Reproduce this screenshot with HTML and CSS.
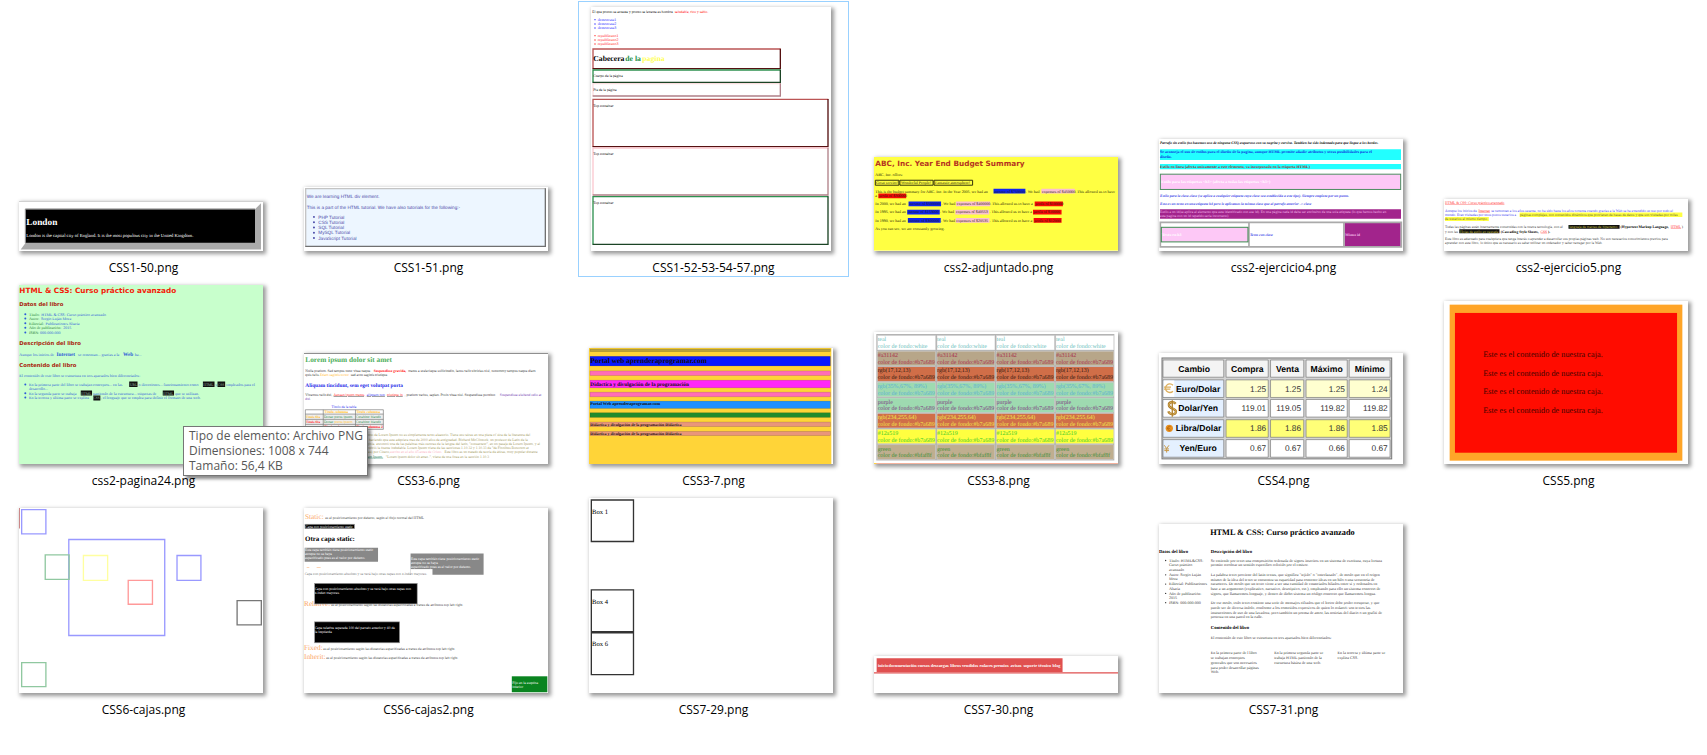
FILE: index.html
```html
<!DOCTYPE html>
<html lang="es">
<head>
<meta charset="utf-8">
<title>Imágenes</title>
<link rel="stylesheet" href="styles.css">
</head>
<body>
<main>
<ul class="files">

<li class="file"><figure>
<svg class="pic" viewBox="0 0 735 150">
<path fill="#aaa" d="M5 146L20 126H711V25L729 7V146Z"/><path stroke="#aaa" stroke-width="2" d="M0 1H735"/>
<rect x="20" y="25" width="691" height="101" fill="#000"/><path d="M19 127V24H711" fill="none" stroke="#888" stroke-width="3"/>
<g fill="#fff"><text class="b" x="22" y="71" font-size="28">London</text>
<text x="22" y="108" font-size="14">London is the capital city of England. It is the most populous city in the United Kingdom.</text></g>
</svg><figcaption>CSS1-50.png</figcaption></figure></li>

<li class="file"><figure>
<svg class="pic sans" viewBox="0 0 735 192">
<rect x="4" y="3" width="724" height="177" fill="#edf6ff"/>
<path d="M5 181V5H728" fill="none" stroke="#c4c4c4" stroke-width="4"/><path d="M4 179H727V4" fill="none" stroke="#707070" stroke-width="4"/>
<g fill="#4a4aa8" font-size="14"><text x="8" y="34">We are learning HTML div element.</text>
<text x="8" y="66">This is a part of the HTML tutorial. We have also tutorials for the following:-</text>
<text x="43" y="95">PHP Tutorial</text><text x="43" y="111">CSS Tutorial</text><text x="43" y="127">SQL Tutorial</text><text x="43" y="143">MySQL Tutorial</text><text x="43" y="159">JavaScript Tutorial</text>
<circle cx="30" cy="90" r="3"/><circle cx="30" cy="106" r="3"/><circle cx="30" cy="122" r="3"/><circle cx="30" cy="138" r="3"/><circle cx="30" cy="154" r="3"/></g>
</svg><figcaption>CSS1-51.png</figcaption></figure></li>

<li class="file selected"><figure>
<svg class="pic narrow" viewBox="62 21 720 732" font-size="11">
<text x="66" y="38">El que pronto se acuesta y pronto se levanta es hombre</text><text x="313" y="38" fill="red">saludable, rico y sabio.</text>
<g fill="#22f" font-size="12"><text x="82" y="63">democrata1</text><text x="82" y="76">democrata2</text><text x="82" y="88">democrata3</text><circle cx="74" cy="59" r="2"/><circle cx="74" cy="72" r="2"/><circle cx="74" cy="84" r="2"/></g>
<g fill="#f22" font-size="12"><text x="82" y="111">republicano1</text><text x="82" y="124">republicano2</text><text x="82" y="136">republicano3</text><circle cx="74" cy="107" r="2"/><circle cx="74" cy="120" r="2"/><circle cx="74" cy="132" r="2"/></g>
<g class="line4"><path stroke="#b55" d="M68 207V147H631"/><path stroke="#511" d="M67 206H630V146"/>
<path stroke="#2f9150" d="M68 248V210H631"/><path stroke="#1b4425" d="M67 247H630V209"/>
<path stroke="#fbdde0" d="M68 289V251H631"/><path stroke="#b08088" d="M67 288H630V250"/>
<path stroke="#b55" d="M68 441V298H774"/><path stroke="#511" d="M67 440H773V297"/>
<path stroke="#fbc8d0" d="M68 586V444H774"/><path stroke="#b08088" d="M67 585H773V443"/>
<path stroke="#2f9150" d="M68 734V590H774"/><path stroke="#1b4425" d="M67 733H773V589"/></g>
<g class="b" font-size="23"><text x="69" y="184">Cabecera</text><text x="165" y="184" fill="#1a9048">de la</text><text x="216" y="184" fill="#ff5">pagina</text></g>
<text x="69" y="231">Cuerpo de la página</text><text x="69" y="274">Pie de la página</text>
<text x="69" y="320">Top container</text><text x="69" y="466">Top container</text><text x="69" y="612">Top container</text>
</svg><figcaption>CSS1-52-53-54-57.png</figcaption></figure></li>

<li class="file"><figure>
<svg class="pic" viewBox="41 81 735 282" font-size="12">
<rect x="41" y="81" width="735" height="282" fill="#ffff42"/>
<text class="verdana" x="45" y="107" font-size="22" fill="#b5351f">ABC, Inc. Year End Budget Summary</text>
<path d="M45 151H116V166H45ZM119 151H219V166H119ZM222 151H338V166H222Z" fill="none" stroke="#33330a" stroke-width="3"/>
<path fill="#1024f0" d="M401 177H497V191H401ZM145 215H243V229H145ZM141 240H239V254H141ZM143 265H242V279H143Z"/>
<path fill="#fbc0d0" d="M545 177H646V191H545ZM288 215H391V229H288ZM286 240H388V254H286ZM287 265H389V279H287Z"/>
<path fill="#f80808" d="M54 191H138V205H54ZM525 215H610V229H525ZM520 240H606V254H520ZM522 265H606V279H522Z"/>
<g fill="#222208"><text x="45" y="137">ABC, Inc. offers:</text><text x="47" y="163">Great service!</text><text x="122" y="163">Wonderful People!</text><text x="225" y="163">Fantastic atmosphere!</text>
<text x="45" y="188">This is the budget summary for ABC, Inc. In the Year 2005, we had an</text><text x="403" y="188">income of $750000</text><text x="498" y="188">. We had</text><text x="547" y="188">expenses of $450000</text><text x="647" y="188">. This allowed us to have</text>
<text x="45" y="202">a</text><text x="56" y="202">profit of $300000</text>
<text x="45" y="226">In 2000, we had an</text><text x="147" y="226">income of $500000</text><text x="244" y="226">. We had</text><text x="290" y="226">expenses of $400000</text><text x="391" y="226">. This allowed us to have a</text><text x="527" y="226">profit of $100000</text>
<text x="45" y="251">In 1995, we had an</text><text x="143" y="251">income of $153000</text><text x="240" y="251">. We had</text><text x="288" y="251">expenses of $40553</text><text x="389" y="251">. This allowed us to have a</text><text x="522" y="251">profit of $10000</text>
<text x="45" y="276">In 1990, we had an</text><text x="145" y="276">income of $300000</text><text x="243" y="276">. We had</text><text x="289" y="276">expenses of $20535</text><text x="390" y="276">. This allowed us to have a</text><text x="524" y="276">profit of $12000</text>
<text x="45" y="302">As you can see, we are constantly growing.</text></g>
</svg><figcaption>css2-adjuntado.png</figcaption></figure></li>

<li class="file"><figure>
<svg class="pic" viewBox="57 27 735 336" font-size="11">
<path fill="#2ff" d="M60 58H786V90H60ZM60 102H786V118H60Z"/>
<rect x="61" y="133" width="724" height="46" fill="#fdc8f6" stroke="#4c8c60" stroke-width="3"/>
<path fill="#a2248c" d="M60 239H786V267H60ZM616 280H785V350H616Z"/>
<path d="M61 278H787V352H61ZM328 278V352M614 278V352" fill="none" stroke="#aaa" stroke-width="5"/>
<rect x="64" y="293" width="261" height="44" fill="#fdc8f6" stroke="#3c8c50" stroke-width="3"/>
<text class="bi" x="60" y="41">Parrafo sin estilo (no hacemos uso de ninguna CSS) asqueroso con su negrita y cursiva. Tambien ha sido indentado para que llegue a los bordes.</text>
<g class="b" font-size="12"><text x="60" y="70" fill="#1030e0">Se aconseja el uso de estilos para el diseño de la pagina, aunque HTML permite añadir atributos y otras posibilidades para el</text><text x="60" y="85" fill="#1030e0">diseño.</text>
<text x="60" y="114" fill="#a03030">Estilo en linea (afecta unicamente a este elemento, va incorporado en la etiqueta HTML)</text>
<text x="64" y="160" fill="#fff">Estilo para las etiquetas &lt;h3&gt; (afecta a todas las etiquetas &lt;h3&gt;)</text>
<text x="66" y="318" fill="#fff">Texto en h3</text></g>
<g class="bi" fill="#3a42e8"><text x="60" y="201">Estilo para la clase.clase (se aplica a cualquier etiqueta cuya clase sea establecida a este tipo). Siempre empieza por un punto.</text>
<text x="60" y="226">Esto es un texto en una etiqueta h4 pero le aplicamos la misma clase que al parrafo anterior -&gt; clase</text><text x="331" y="318">Texto con clase</text></g>
<g fill="#f4b8ea"><text x="60" y="249">Estilo a un id(se aplica al elemento que este identificado con ese id). En una página cada id debe ser exclusivo de una sola etiqueta (lo que hemos hecho en</text><text x="60" y="262">esta pagina con un id repetido seria incorrecto)</text><text x="618" y="318" class="b">Mismo id</text></g>
</svg><figcaption>css2-ejercicio4.png</figcaption></figure></li>

<li class="file"><figure>
<svg class="pic" viewBox="72 57 735 156" font-size="11">
<path fill="#ff4" d="M300 98H790V111H300ZM75 111H207V123H75Z"/><path fill="#111" d="M447 135H601V147H447ZM118 148H239V160H118Z"/>
<text class="u" x="75" y="73" fill="#f33">HTML &amp; CSS: Curso práctico avanzado</text>
<g fill="#4444f0"><text x="75" y="95">Aunque los inicios de</text><text class="u" x="176" y="95" fill="#f22">Internet</text><text x="214" y="95">se remontan a los años sesenta, no ha sido hasta los años noventa cuando gracias a la Web se ha extendido su uso por todo el</text>
<text x="75" y="108">mundo. Eran visitadas por unos pocos usuarios a</text></g>
<g fill="#66662a"><text x="301" y="108">páginas complejas, con contenidos dinámicos que provienen de bases de datos y que son visitadas por miles</text><text x="75" y="120">de usuarios al mismo tiempo</text></g>
<g fill="#444"><text x="75" y="145">Todas las páginas están internamente construidas con la nueva tecnología, con el</text><text x="75" y="158">y con las</text>
<text x="75" y="181">Este libro es adecuado para cualquiera que tenga interés o aprender a desarrollar sus propias páginas web. No son necesarios conocimientos previos para</text>
<text x="75" y="194">aprender con este libro, lo único que es necesario es saber utilizar un ordenador y saber navegar por la Web.</text></g>
<g fill="#c8c040"><text x="449" y="145">lenguaje de marcas de hipertexto</text><text x="120" y="158">Hojas de estilo en cascada</text></g>
<g class="b"><text x="604" y="145">(Hypertext Markup Language,</text><text x="243" y="158">(Cascading Style Sheets,</text><text x="385" y="158">).</text></g>
<g class="u" fill="#f33"><text x="755" y="145">HTML</text><text x="363" y="158">CSS</text></g><text x="788" y="145">)</text>
</svg><figcaption>css2-ejercicio5.png</figcaption></figure></li>

<li class="file"><figure>
<svg class="pic" viewBox="57 27 735 540" font-size="12">
<rect x="57" y="27" width="735" height="540" fill="#c8ffcc"/>
<text class="verdana" x="58" y="51" font-size="22" fill="#f41c08">HTML &amp; CSS: Curso práctico avanzado</text>
<g class="verdana" font-size="16" fill="#a8240c"><text x="58" y="90">Datos del libro</text><text x="58" y="208">Descripción del libro</text><text x="58" y="274">Contenido del libro</text></g>
<g fill="#2a7a3a"><text x="87" y="119">Título:</text><text x="87" y="132">Autor:</text><text x="87" y="146">Editorial:</text><text x="87" y="160">Año de publicación:</text><text x="87" y="174">ISBN:</text></g>
<g fill="#2c5ad8"><text x="124" y="119">HTML &amp; CSS: Curso práctico avanzado</text><text x="123" y="132">Sergio Luján Mora</text><text x="137" y="146">Publicaciones Altaria</text><text x="190" y="160">2015</text><text x="120" y="174">000-000-000</text>
<circle cx="76" cy="115" r="3"/><circle cx="76" cy="128" r="3"/><circle cx="76" cy="142" r="3"/><circle cx="76" cy="156" r="3"/><circle cx="76" cy="170" r="3"/>
<text x="58" y="241">Aunque los inicios de</text><text class="b" x="170" y="241" font-size="16">Internet</text><text x="235" y="241">se remontan... gracias a la</text><text class="b" x="370" y="241" font-size="16">Web</text><text x="406" y="241">ha...</text>
<text x="58" y="303">El contenido de este libro se estructura en tres apartados bien diferenciados:</text>
<circle cx="76" cy="327" r="3"/><circle cx="76" cy="353" r="3"/><circle cx="76" cy="366" r="3"/>
<text x="87" y="331">En la primera parte del libro se trabajan conceptos... en las</text><text x="417" y="331">o direcciones... funcionamiento como</text><text x="648" y="331">y</text><text x="681" y="331">empleados para el</text>
<text x="87" y="344">desarrollo...</text>
<text x="87" y="357">En la segunda parte se trabaja</text><text x="280" y="357">partiendo de la estructura... etiquetas de</text><text x="527" y="357">que se utilizan.</text>
<text x="87" y="370">En la tercera y última parte se explica</text><text x="303" y="370">, el lenguaje que se emplea para definir el formato de una web.</text></g>
<path fill="#111" d="M389 318H414V334H389ZM611 318H646V334H611ZM655 318H678V334H655ZM243 345H277V360H243ZM490 345H524V360H490ZM281 360H302V375H281Z"/>
<g fill="#9ab8a0" font-size="11"><text x="391" y="330">URL</text><text x="612" y="330">HTML</text><text x="656" y="330">CSS</text><text x="244" y="357">HTML</text><text x="491" y="357">HTML</text><text x="281" y="371">CSS</text></g>
</svg><figcaption>css2-pagina24.png</figcaption></figure>
<div class="tooltip" role="tooltip">Tipo de elemento: Archivo PNG<br>Dimensiones: 1008 x 744<br>Tamaño: 56,4 KB</div>
</li>

<li class="file"><figure>
<svg class="pic" viewBox="42 37 735 336" font-size="11">
<path stroke="#777" stroke-width="3" d="M42 38H777"/>
<text class="b" x="46" y="63" font-size="22" fill="#4cae5a">Lorem ipsum dolor sit amet</text>
<g fill="#333"><text x="46" y="94">Nulla pretium. Sed tempus nunc vitae neque.</text><text x="356" y="94">metus a scelerisque sollicitudin, lacus velit ultricies nisl, nonummy tempus neque diam</text><text x="46" y="107">quis felis.</text><text x="183" y="107">sed arcu sagittis tristique.</text>
<text x="46" y="166">Vivamus velit dui,</text><text x="345" y="166">, pretium varius, sapien. Proin vitae nisi. Suspendisse porttitor.</text></g>
<text class="b" x="252" y="94" fill="#f11">Suspendisse gravida,</text><text x="90" y="107" fill="#fb3">Etiam sagittis tortor</text>
<text class="b" x="46" y="138" font-size="16" fill="#1c28e8">Aliquam tincidunt, sem eget volutpat porta</text>
<g class="u"><text x="131" y="166" fill="#f22">Aenean ipsum metus,</text><text x="231" y="166" fill="#33e">aliquam non</text><text x="292" y="166" fill="#f22">tristique in</text></g>
<g fill="#7040b0"><text x="632" y="166">Suspendisse eleifend odio at</text><text x="46" y="179">dui.</text></g>
<text x="125" y="202" fill="#33e">Título de la tabla</text>
<path fill="#eee" d="M46 221H281V267H46Z"/>
<path d="M46 208H281V267H46ZM46 221H281M46 237H281M46 252H281M100 208V267M197 208V267" fill="none" stroke="#777" stroke-width="2"/>
<g class="b"><g fill="#fb2"><text x="103" y="219">Título columna</text><text x="199" y="219">Título columna</text><text x="48" y="233" font-size="10">Título fila</text></g>
<g fill="#f22"><text x="48" y="248" font-size="10">Título fila</text><text x="103" y="263">Título columna</text><text x="199" y="263">Título columna 2</text></g></g>
<g fill="#2a8a4a"><text x="102" y="233">Donec purus ipsum</text><text x="198" y="233">Curabitur blandit</text><text x="102" y="248">Donec</text><text x="198" y="248">Curabitur blandit</text></g><text x="134" y="248" fill="#fb2">purus ipsum</text>
<g fill="#a39a62"><text x="218" y="288">el texto de Lorem Ipsum no es simplemente texto aleatorio. Tiene sus raices en una pieza cl´sica de la literatura del</text>
<text x="218" y="301">ino, haciendo que este adquiera mas de 2000 años de antiguedad. Richard McClintock, un profesor de Latin de la</text>
<text x="218" y="314">Virginia, encontró una de las palabras más oscuras de la lengua del latín, "consecteur", en un pasaje de Lorem Ipsum, y al</text>
<text x="218" y="327">descubrió la fuente indudable. Lorem Ipsum viene de las secciones 1.10.32 y 1.10.33 de "de Finnibus Bonorum et</text>
<text x="218" y="339">Males) por Cicero,</text><text x="465" y="339">Este libro es un tratado de teoría de éticas, muy popular durante</text>
<text x="288" y="352">"Lorem ipsum dolor sit amet..", viene de una linea en la sección 1.10.3</text></g>
<text x="302" y="339" fill="#fab0c0">escrito en el año 45 antes de Cristo.</text><text class="u" x="218" y="352" fill="#1a8060">Lorem Ipsum,</text>
</svg><figcaption>CSS3-6.png</figcaption></figure></li>

<li class="file"><figure>
<svg class="pic" viewBox="57 66 735 351">
<rect x="57" y="66" width="730" height="351" fill="#ffd438"/>
<g stroke="#000" stroke-opacity=".18" stroke-width="2"><rect x="60" y="69" width="724" height="8" fill="#b8a23c"/><rect x="60" y="91" width="724" height="29" fill="#0818ff"/><rect x="60" y="135" width="724" height="14" fill="#ff6eb6"/><rect x="60" y="163" width="724" height="23" fill="#ff28f8"/><rect x="60" y="199" width="724" height="14" fill="#ff6eb6"/><rect x="60" y="226" width="724" height="22" fill="#1e90ff"/><rect x="60" y="261" width="724" height="14" fill="#228b2c"/><rect x="60" y="289" width="724" height="14" fill="#e9967a"/><rect x="60" y="317" width="724" height="13" fill="#e9967a"/></g>
<g class="b" fill="#120c10"><text x="61" y="112" font-size="22">Portal web aprenderaprogramar.com</text><text x="61" y="179" font-size="16">Didactica y divulgación de la programación</text><text x="61" y="239" font-size="13">Portal Web aprenderaprogramar.com</text><text x="61" y="301" font-size="12">Didáctica y divulgación de la programación Didáctica</text><text x="61" y="328" font-size="12">Didáctica y divulgación de la programación Didáctica</text></g>
</svg><figcaption>CSS3-7.png</figcaption></figure></li>

<li class="file"><figure>
<svg class="pic" viewBox="41 18 735 399" font-size="18">
<path fill="#f0987c" d="M41 413H776V417H41Z"/><path fill="#fd3" d="M41 413H48V417H41Z"/>
<rect x="48" y="24" width="717" height="381" fill="#b4b4b4"/>
<g id="swatches"><g stroke="#ddd"><rect x="52" y="29" width="174" height="43" fill="#fff"/><rect x="52" y="76" width="174" height="43" fill="#b7a689"/><rect x="52" y="123" width="174" height="43" fill="#d06e48"/><rect x="52" y="170" width="174" height="43" fill="#9edab0"/><rect x="52" y="217" width="174" height="43" fill="#9edab0"/><rect x="52" y="264" width="174" height="43" fill="#d06e48"/><rect x="52" y="311" width="174" height="43" fill="#ffff40"/><rect x="52" y="358" width="174" height="43" fill="#bfae8f"/></g>
<g fill="#6cc0bc"><text x="52" y="45">teal</text><text x="52" y="65">color de fondo:white</text></g>
<g fill="#a82e4c"><text x="52" y="93">#a31142</text><text x="52" y="113">color de fondo:#b7a689</text></g>
<g fill="#301810"><text x="52" y="140">rgb(17,12,13)</text><text x="52" y="160">color de fondo:#b7a689</text></g>
<g fill="#5ab0d4"><text x="52" y="187">rgb(35%,67%, 89%)</text><text x="52" y="207">color de fondo:#b7a689</text></g>
<g fill="#7c3a80"><text x="52" y="234">purple</text><text x="52" y="254">color de fondo:#b7a689</text></g>
<g fill="#f0e848"><text x="52" y="281">rgb(234,255,64)</text><text x="52" y="301">color de fondo:#b7a689</text></g>
<g fill="#38cc28"><text x="52" y="328">#12a519</text><text x="52" y="348">color de fondo:#b7a689</text></g>
<g fill="#3c8c34"><text x="52" y="375">green</text><text x="52" y="395">color de fondo:#bfaf8f</text></g></g>
</svg><figcaption>CSS3-8.png</figcaption></figure></li>

<li class="file"><figure>
<svg class="pic sans" viewBox="0 0 735 336" font-size="25">
<rect x="9" y="15" width="692" height="304" fill="#d4d4d4" stroke="#777" stroke-width="3"/>
<g stroke="#777" stroke-width="2"><path fill="#f4f4f4" d="M12 21H195V73H12ZM202 21H329V73H202ZM336 21H436V73H336ZM443 21H567V73H443ZM573 21H696V73H573Z"/>
<path fill="#e4f0ff" d="M12 81H195V134H12ZM12 140H195V193H12ZM12 201H195V254H12ZM12 261H195V314H12Z"/>
<path fill="#ffffd0" d="M202 81H329V134H202ZM336 81H436V134H336ZM443 81H567V134H443ZM573 81H696V134H573Z"/>
<path fill="#fff" d="M202 140H329V193H202ZM336 140H436V193H336ZM443 140H567V193H443ZM573 140H696V193H573ZM202 261H329V314H202ZM336 261H436V314H336ZM443 261H567V314H443ZM573 261H696V314H573Z"/>
<path fill="#ffff78" d="M202 201H329V254H202ZM336 201H436V254H336ZM443 201H567V254H443ZM573 201H696V254H573Z"/></g>
<path fill="#fff" d="M14 83H46V132H14ZM14 142H62V191H14Z"/>
<g class="b mid" font-size="26"><text x="106" y="56">Cambio</text><text x="266" y="56">Compra</text><text x="387" y="56">Venta</text><text x="505" y="56">Máximo</text><text x="635" y="56">Mínimo</text>
<text x="118" y="116">Euro/Dolar</text><text x="118" y="175">Dolar/Yen</text><text x="119" y="235">Libra/Dolar</text><text x="118" y="295">Yen/Euro</text></g>
<g class="end" fill="#333"><text x="323" y="116">1.25</text><text x="428" y="116">1.25</text><text x="560" y="116">1.25</text><text x="689" y="116">1.24</text>
<text x="323" y="175">119.01</text><text x="428" y="175">119.05</text><text x="560" y="175">119.82</text><text x="689" y="175">119.82</text>
<text x="323" y="235">1.86</text><text x="428" y="235">1.86</text><text x="560" y="235">1.86</text><text x="689" y="235">1.85</text>
<text x="323" y="295">0.67</text><text x="428" y="295">0.67</text><text x="560" y="295">0.66</text><text x="689" y="295">0.67</text></g>
<g fill="none"><path d="M42 97A13 13 0 1 0 42 115M15 103H36M15 109H34" stroke="#dcb060" stroke-width="4"/>
<path d="M50 153C44 145 28 147 30 158S52 166 51 177S32 186 28 176" stroke="#a87828" stroke-width="7"/><path d="M50 153C44 145 28 147 30 158S52 166 51 177S32 186 28 176" stroke="#e0b860" stroke-width="3"/><path d="M40 142V192" stroke="#b48430" stroke-width="4"/>
<circle cx="31" cy="227" r="11" fill="#e89020"/><path d="M35 222A6 6 0 1 0 35 232M25 227H33" stroke="#a85c08" stroke-width="2"/>
<path d="M16 278L23 288L30 278M23 288V300M16 289H30M16 294H30" stroke="#c89848" stroke-width="3"/></g>
</svg><figcaption>CSS4.png</figcaption></figure></li>

<li class="file"><figure>
<svg class="pic" viewBox="0 0 735 492" font-size="25">
<rect x="17" y="11" width="701" height="470" fill="#ffa528"/><rect x="33" y="36" width="669" height="421" fill="#ff0c00"/>
<g fill="#400400"><text x="118" y="168">Este es el contenido de nuestra caja.</text><text x="118" y="225">Este es el contenido de nuestra caja.</text><text x="118" y="281">Este es el contenido de nuestra caja.</text><text x="118" y="338">Este es el contenido de nuestra caja.</text></g>
</svg><figcaption>CSS5.png</figcaption></figure></li>

<li class="file"><figure>
<svg class="pic" viewBox="0 0 735 558">
<g class="line4"><path stroke="#c88" d="M1 0V62"/>
<path stroke="#99f" d="M8 5H81V78H8ZM150 95H439V384H150ZM476 143H548V218H476Z"/>
<path stroke="#90c8a0" d="M79 141H151V215H79ZM8 466H81V538H8Z"/><path stroke="#ffffa0" d="M194 143H267V218H194Z"/><path stroke="#f99" d="M329 218H402V290H329Z"/><path stroke="#777" d="M657 279H730V352H657Z"/></g>
</svg><figcaption>CSS6-cajas.png</figcaption></figure></li>

<li class="file"><figure>
<svg class="pic" viewBox="0 0 735 558" font-size="12">
<g fill="#fba868" font-size="22"><text x="3" y="33">Static:</text><text x="0" y="294">Relative:</text><text x="0" y="427">Fixed:</text><text x="0" y="455">Inherit:</text></g>
<g fill="#444" font-size="11"><text x="64" y="33">es el posicionamiento por defecto, según el flujo normal del HTML</text><text x="82" y="294">es el posicionamiento según las distancias especificadas a traves de atributos top left right.</text><text x="58" y="427">es el posicionamiento según las distancias especificadas a traves de atributos top left right.</text><text x="67" y="455">es el posicionamiento según las distancias especificadas a traves de atributos top left right.</text></g>
<text class="b" x="3" y="99" font-size="21">Otra capa static:</text>
<path fill="#888" d="M2 120H223V162H2ZM321 137H541V201H321Z"/>
<path fill="#fba868" d="M8 179H16V181H8ZM38 179H50V181H38Z"/>
<g stroke="#999" stroke-width="2"><rect x="3" y="49" width="149" height="13"/><rect x="32" y="227" width="309" height="62"/><rect x="32" y="343" width="256" height="63"/></g>
<rect x="626" y="507" width="107" height="48" fill="#0a8420"/>
<g fill="#fff" font-size="11"><text x="4" y="60">Capa con posicionamiento static</text><text x="3" y="131">Esta capa también tiene posicionamiento static</text><text x="3" y="143">aunque no se haya</text><text x="3" y="155">especificado pues es el valor por defecto.</text>
<text x="322" y="158">Esta capa también tiene posicionamiento static</text><text x="322" y="170">aunque no se haya</text><text x="322" y="182">especificado pues es el valor por defecto.</text>
<text x="32" y="248">Capa con posicionamiento absoluto y se verá bajo otras capas con</text><text x="32" y="260">z-index mayores.</text>
<text x="32" y="365">Capa relativa separada 100 del parrafo anterior y 40 de</text><text x="32" y="377">la izquierda</text><text x="627" y="529">Fijo en la esquina</text><text x="627" y="541">inferior</text></g>
<path fill="#fff" d="M321 184H387V203H321Z"/>
<text x="2" y="201" fill="#777" font-size="11">Capa con posicionamiento absoluto y se verá bajo otras capas con z-index mayores.</text>
</svg><figcaption>CSS6-cajas2.png</figcaption></figure></li>

<li class="file"><figure>
<svg class="pic" viewBox="0 0 735 588" font-size="20">
<g fill="none" stroke="#333" stroke-width="4"><path d="M7 6H134V131H7ZM7 277H134V403H7ZM7 406H134V532H7Z"/></g>
<text x="9" y="49">Box 1</text><text x="9" y="318">Box 4</text><text x="9" y="447">Box 6</text>
</svg><figcaption>CSS7-29.png</figcaption></figure></li>

<li class="file"><figure>
<svg class="pic" viewBox="0 0 735 114" font-size="13">
<path fill="#e05050" d="M8 7H568V48H8ZM0 49H735V53H0Z"/>
<g class="b" fill="#fff"><text x="12" y="32">inicio</text><text x="44" y="32">documentación</text><text x="132" y="32">cursos</text><text x="171" y="32">descargas</text><text x="230" y="32">libros vendidos</text><text x="318" y="32">enlaces premios</text><text x="411" y="32">avisos</text><text x="450" y="32">soporte</text><text x="495" y="32">técnico</text><text x="538" y="32">blog</text></g>
</svg><figcaption>CSS7-30.png</figcaption></figure></li>

<li class="file"><figure>
<svg class="pic" viewBox="57 39 735 510" font-size="12">
<g class="b"><text x="211" y="73" font-size="25">HTML &amp; CSS: Curso práctico avanzado</text><text x="57" y="125" font-size="14">Datos del libro</text><text x="213" y="125" font-size="14">Descripción del libro</text><text x="213" y="356" font-size="14">Contenido del libro</text></g>
<g fill="#333"><circle cx="77" cy="149" r="2"/><circle cx="77" cy="192" r="2"/><circle cx="77" cy="220" r="2"/><circle cx="77" cy="248" r="2"/><circle cx="77" cy="276" r="2"/>
<text x="87" y="153">Título: HTML&amp;CSS:</text><text x="87" y="167">Curso práctico</text><text x="87" y="181">avanzado</text><text x="87" y="196">Autor: Sergio Luján</text><text x="87" y="209">Mora</text><text x="87" y="224">Editorial: Publicaciones</text><text x="87" y="238">Altaria</text><text x="87" y="252">Año de publicación:</text><text x="87" y="266">2015</text><text x="87" y="280">ISBN: 000-000-000</text>
<text x="213" y="153">Se entiende por texto una composición ordenada de signos inscritos en un sistema de escritura, cuya lectura</text><text x="213" y="167">permite recobrar un sentido específico referido por el emisor.</text>
<text x="213" y="196">La palabra texto proviene del latín textus, que significa "tejido" o "entrelazado", de modo que en el origen</text><text x="213" y="210">mismo de la idea del texto se encuentra su capacidad para contener ideas en un hilo o una secuencia de</text><text x="213" y="224">caracteres. De modo que un texto viene a ser una cantidad de enunciados hilados entre sí y ordenados en</text><text x="213" y="238">base a un argumento (explicativo, narrativo, descriptivo, etc.), empleando para ello un sistema concreto de</text><text x="213" y="252">signos, que llamaremos lenguaje, y dentro de dicho sistema un código concreto que llamaremos lengua.</text>
<text x="213" y="281">De ese modo, todo texto contiene una serie de mensajes cifrados que el lector debe poder recuperar, y que</text><text x="213" y="295">puede ser de diversa índole, conforme a los cometidos expresivos de quien lo redactó: son textos las</text><text x="213" y="309">instrucciones de uso de una lavadora, pero también un poema de amor, las noticias del diario o un grafiti de</text><text x="213" y="323">protesta en una pared en la calle.</text>
<text x="213" y="385">El contenido de este libro se estructura en tres apartados bien diferenciados:</text>
<text x="213" y="432">En la primera parte de l libro</text><text x="213" y="446">se trabajan conceptos</text><text x="213" y="460">generales que son necesarios</text><text x="213" y="475">para poder desarrollar páginas</text><text x="213" y="489">Web.</text>
<text x="404" y="432">En la primera segunda parte se</text><text x="404" y="446">trabaja HTML partiendo de la</text><text x="404" y="460">estructura básica de una web.</text><text x="595" y="432">En la tercera y última parte se</text><text x="595" y="446">explica CSS.</text></g>
</svg><figcaption>CSS7-31.png</figcaption></figure></li>

</ul>
</main>
<script src="swatches.js"></script>
</body>
</html>
```

FILE: styles.css
```css
* { box-sizing: border-box; }
body { margin: 0; background: #fff; color: #000; font-family: "Open Sans", "Noto Sans", sans-serif; font-size: 12px; }
.files { list-style: none; margin: 0; padding: 1px 0 0 8px; display: grid; grid-template-columns: repeat(auto-fill, 271px); gap: 2px 14px; align-items: end; }
.file { position: relative; border: 1px solid transparent; padding-top: 5px; }
.file.selected { border-color: #99d1ff; }
figure { margin: 0; display: flex; flex-direction: column; align-items: center; }
figcaption { margin-top: 9px; height: 16px; line-height: 16px; white-space: nowrap; }
.pic { display: block; width: 244px; height: auto; margin-right: 5px; background: #fff; box-shadow: 2px 2px 4px 1px rgba(0, 0, 0, .4); font-family: "Liberation Serif", serif; text-rendering: geometricPrecision; }
.pic.narrow { width: 240px; }
.pic.sans { font-family: "Liberation Sans", sans-serif; }
.pic text { white-space: pre; }
.b { font-weight: bold; }
.bi { font-weight: bold; font-style: italic; }
.u { text-decoration: underline; }
.mid { text-anchor: middle; }
.end { text-anchor: end; }
.verdana { font-family: "DejaVu Sans", sans-serif; font-weight: bold; }
.line4 { fill: none; stroke-width: 4; }
.tooltip { position: absolute; z-index: 2; left: 174px; top: 146px; padding: 1px 4px 2px 5px; border: 1px solid #767676; background: #fff; color: #575757; line-height: 15px; white-space: nowrap; box-shadow: 3px 3px 3px rgba(0, 0, 0, .45); }
```

FILE: swatches.js
```js
// Repeats the colour column to fill the four-column table.
const column = document.getElementById('swatches');
for (let i = 1; i < 4; i++) {
  const copy = column.cloneNode(true);
  copy.removeAttribute('id');
  copy.setAttribute('transform', `translate(${i * 179} 0)`);
  column.parentNode.append(copy);
}
```
